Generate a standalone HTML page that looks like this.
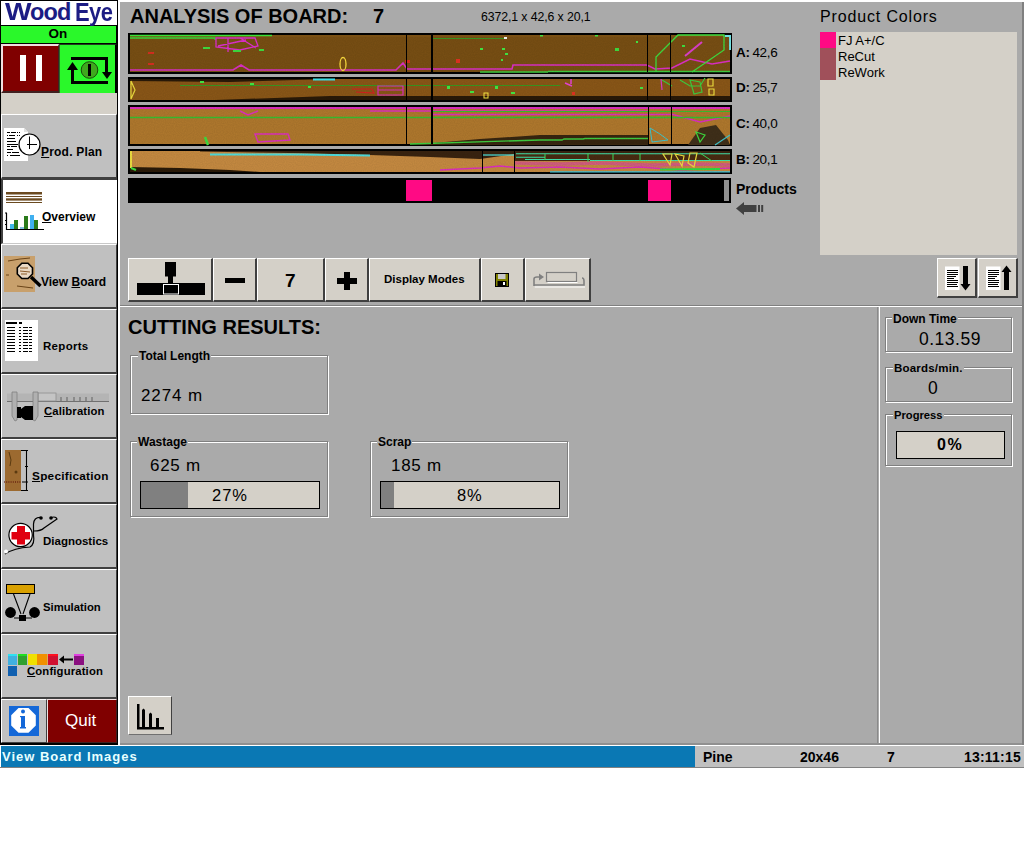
<!DOCTYPE html>
<html><head><meta charset="utf-8">
<style>
*{box-sizing:border-box}
html,body{margin:0;padding:0}
body{width:1024px;height:859px;background:#fff;position:relative;overflow:hidden;font-family:"Liberation Sans",sans-serif;color:#000}
.a{position:absolute}
.sbtn{position:absolute;left:1px;width:116px;height:65px;background:#c0c0c0;border-top:1px solid #fff;border-left:1px solid #fff;border-bottom:2px solid #404040;border-right:1px solid #404040}
.lbl{position:absolute;font-weight:bold;font-size:12px;white-space:nowrap;line-height:1}
.tb{position:absolute;top:258px;height:44px;background:#d4d0c8;border-top:1px solid #fff;border-left:1px solid #fff;border-right:2px solid #404040;border-bottom:2px solid #404040}
.grp{position:absolute;border:1px solid #808080;box-shadow:1px 1px 0 #fff, inset 1px 1px 0 #fff}
.gl{position:absolute;font-weight:bold;font-size:12px;line-height:1;background:#aaa;padding:0 1px;white-space:nowrap}
.txt{position:absolute;white-space:nowrap;line-height:1}
.pb{position:absolute;border:1px solid #000;background:#d4d0c8}
</style></head><body>
<!-- sidebar frame -->
<div class="a" style="left:0;top:0;width:118px;height:745px;background:#000"></div>
<div class="a" style="left:118px;top:0;width:2px;height:745px;background:#fff"></div>
<!-- main gray -->
<div class="a" style="left:120px;top:0;width:904px;height:745px;background:#aaa;border-top:2px solid #fff"></div>
<div class="a" style="left:1022px;top:2px;width:2px;height:743px;background:#808080"></div>

<!-- logo -->
<div class="a" style="left:1px;top:1px;width:116px;height:24px;background:#fff"></div>
<div class="txt" style="left:5px;top:1px;font-size:23.5px;font-weight:bold;color:#1c1c84;transform:scaleX(1.2);transform-origin:0 0">W</div><div class="txt" style="left:30px;top:1px;font-size:23.5px;font-weight:bold;color:#1c1c84;letter-spacing:-0.9px">ood</div><div class="txt" style="left:75px;top:0px;font-size:25.5px;font-weight:bold;color:#1c1c84;letter-spacing:-0.6px;transform:scaleX(0.86);transform-origin:0 0">Eye</div>
<!-- On -->
<div class="a" style="left:1px;top:26px;width:115px;height:17px;background:#2af82a"></div>
<div class="txt" style="left:48.5px;top:27px;font-size:13.5px;font-weight:bold">On</div>
<!-- pause -->
<div class="a" style="left:1px;top:44px;width:58px;height:49px;background:#800000;border-top:2px solid #f0e0e0;border-left:2px solid #f0e0e0;border-right:1px solid #402020;border-bottom:2px solid #402020"></div>
<div class="a" style="left:20px;top:55px;width:6px;height:26px;background:#fff"></div>
<div class="a" style="left:36px;top:55px;width:6px;height:26px;background:#fff"></div>
<!-- refresh -->
<div class="a" style="left:59px;top:44px;width:58px;height:49px;background:#2af82a;border-top:1px solid #204020;border-left:1px solid #2a6a2a;border-right:2px solid #000"></div>
<svg class="a" style="left:59px;top:44px" width="58" height="49" viewBox="0 0 58 49">
 <path d="M13.5 25 V38.5 H49 M12 14.5 H47.5 V28" fill="none" stroke="#000" stroke-width="3"/>
 <path d="M8 26 L13.5 18 L19 26 Z" fill="#000"/>
 <path d="M43 28 L48 35 L53 28 Z" fill="#000"/>
 <circle cx="30.5" cy="26" r="8.3" fill="#3fa81e" stroke="#1a4a0a" stroke-width="1"/>
 <rect x="29" y="20" width="3" height="12" fill="#000"/>
</svg>
<!-- light strip -->
<div class="a" style="left:1px;top:93px;width:116px;height:21px;background:#d4d0c8"></div>

<!-- sidebar buttons -->
<div class="sbtn" style="top:114px"></div>
<div class="a" style="left:1px;top:179px;width:116px;height:65px;background:#fff;border-top:1px solid #404040;border-left:2px solid #404040;border-bottom:1px solid #c8c8c8"></div>
<div class="sbtn" style="top:244px"></div>
<div class="sbtn" style="top:309px"></div>
<div class="sbtn" style="top:374px"></div>
<div class="sbtn" style="top:439px"></div>
<div class="sbtn" style="top:504px"></div>
<div class="sbtn" style="top:569px"></div>
<div class="sbtn" style="top:634px"></div>

<div class="lbl" style="left:41px;top:146px;letter-spacing:0.2px"><u>P</u>rod. Plan</div>
<div class="lbl" style="left:42px;top:211px"><u>O</u>verview</div>
<div class="lbl" style="left:41px;top:276px">View <u>B</u>oard</div>
<div class="lbl" style="left:43px;top:341px;font-size:11.5px;letter-spacing:0.3px">Reports</div>
<div class="lbl" style="left:44px;top:406px;font-size:11.3px;letter-spacing:0.15px"><u>C</u>alibration</div>
<div class="lbl" style="left:32px;top:471px;font-size:11.8px;letter-spacing:0.25px"><u>S</u>pecification</div>
<div class="lbl" style="left:43px;top:536px;font-size:11.5px">Diagnostics</div>
<div class="lbl" style="left:43px;top:601.5px;font-size:11.3px">Simulation</div>
<div class="lbl" style="left:27px;top:666px;font-size:11.3px;letter-spacing:0.15px"><u>C</u>onfiguration</div>

<!-- info / quit -->
<div class="a" style="left:1px;top:699px;width:46px;height:44px;background:#c0c0c0;border-top:1px solid #fff;border-left:1px solid #fff;border-right:1px solid #404040;border-bottom:1px solid #404040"></div>
<div class="a" style="left:47px;top:699px;width:70px;height:44px;background:#800000;border-top:1px solid #f0e0e0;border-left:1px solid #f0e0e0;border-bottom:1px solid #402020;border-right:1px solid #402020"></div>
<div class="txt" style="left:65px;top:712px;font-size:17px;color:#fff">Quit</div>

<!-- sidebar icons -->
<svg class="a" style="left:0;top:0" width="118" height="745" viewBox="0 0 118 745">
<!-- prod plan -->
<path d="M4 128 H24 L28 132 V161 H4 Z" fill="#fff"/>
<path d="M24 128 V132 H28" fill="#e0e0e0"/>
<g fill="#000">
<rect x="7" y="132" width="3" height="1"/><rect x="11" y="132" width="5" height="1"/><rect x="17" y="132" width="1" height="1"/><rect x="19" y="132" width="1" height="1"/>
<rect x="7" y="135" width="1" height="1"/><rect x="9" y="135" width="6" height="1"/><rect x="17" y="135" width="1" height="1"/><rect x="19" y="135" width="1" height="1"/>
<rect x="7" y="138" width="8" height="1"/><rect x="7" y="141" width="9" height="1"/><rect x="7" y="144" width="11" height="1"/>
<rect x="7" y="146" width="3" height="1"/><rect x="11" y="146" width="6" height="1"/>
<rect x="7" y="149" width="6" height="1"/><rect x="7" y="152" width="4" height="1"/><rect x="12" y="152" width="7" height="1"/>
<rect x="7" y="155" width="1" height="1"/><rect x="10" y="155" width="10" height="1"/>
</g>
<circle cx="29.5" cy="144.5" r="10.5" fill="#fff" stroke="#000" stroke-width="1.2"/>
<path d="M27 144.5 H37 M29.5 136.5 V149" stroke="#000" stroke-width="1"/>
<!-- overview -->
<g fill="#6b4a20"><rect x="6" y="192" width="36" height="2.5"/><rect x="6" y="196" width="36" height="1"/><rect x="6" y="198.3" width="36" height="2.3"/><rect x="6" y="202" width="36" height="1"/></g>
<path d="M6.5 213 V229.5 H44 M5 213 H7 M5 220.5 H7 M5 224.5 H7" fill="none" stroke="#000" stroke-width="1.2"/>
<rect x="10" y="224" width="4" height="5" fill="#40b8e8"/><rect x="14" y="220" width="4" height="9" fill="#2a7a1a"/>
<rect x="20" y="227" width="4" height="2" fill="#80c0e0"/><rect x="24" y="216" width="4" height="13" fill="#2a7a1a"/>
<rect x="30" y="215" width="4" height="14" fill="#40b0f0"/><rect x="34" y="220" width="4" height="9" fill="#2a7a1a"/>
<!-- view board -->
<rect x="4" y="256" width="31" height="36" fill="#c8a06c"/>
<path d="M8 261 L20 259 L30 258 M17 286 L25 287 L33 288 M6 275 H9" stroke="#6a4418" stroke-width="1" fill="none"/>
<path d="M21.8 263.3 H28 L32.5 267.8 V274 L28 278.5 H21.8 L17.3 274 V267.8 Z" fill="#e8d8c4" stroke="#000" stroke-width="1.6"/>
<path d="M20 268 H28 M20 271 L30 272 M21 274 H27" stroke="#8a5a28" stroke-width="1"/>
<path d="M31 277 L40.5 286" stroke="#000" stroke-width="3.4"/>
<!-- reports -->
<rect x="5" y="320" width="33" height="41" fill="#fff"/>
<rect x="6" y="322" width="11" height="2" fill="#000"/><rect x="19" y="322" width="3" height="2" fill="#000"/>
<g fill="#000" id="rrow">
<rect x="7" y="327" width="8" height="1"/><rect x="19" y="327" width="2" height="1"/><rect x="23" y="327" width="5" height="1"/><rect x="29" y="327" width="3" height="1"/>
<rect x="7" y="330" width="8" height="1"/><rect x="19" y="330" width="2" height="1"/><rect x="23" y="330" width="5" height="1"/><rect x="29" y="330" width="3" height="1"/>
<rect x="7" y="333" width="8" height="1"/><rect x="19" y="333" width="2" height="1"/><rect x="23" y="333" width="5" height="1"/><rect x="29" y="333" width="3" height="1"/>
<rect x="7" y="336" width="8" height="1"/><rect x="19" y="336" width="2" height="1"/><rect x="23" y="336" width="5" height="1"/><rect x="29" y="336" width="3" height="1"/>
<rect x="7" y="339" width="8" height="1"/><rect x="19" y="339" width="2" height="1"/><rect x="23" y="339" width="5" height="1"/><rect x="29" y="339" width="3" height="1"/>
<rect x="7" y="342" width="8" height="1"/><rect x="19" y="342" width="2" height="1"/><rect x="23" y="342" width="5" height="1"/><rect x="29" y="342" width="3" height="1"/>
<rect x="7" y="345" width="8" height="1"/><rect x="19" y="345" width="2" height="1"/><rect x="23" y="345" width="5" height="1"/><rect x="29" y="345" width="3" height="1"/>
<rect x="7" y="348" width="8" height="1"/><rect x="19" y="348" width="2" height="1"/><rect x="23" y="348" width="5" height="1"/><rect x="29" y="348" width="3" height="1"/>
<rect x="7" y="351" width="8" height="1"/><rect x="19" y="351" width="2" height="1"/><rect x="23" y="351" width="5" height="1"/><rect x="29" y="351" width="3" height="1"/>
</g>
<!-- calibration -->
<rect x="7" y="393.5" width="102" height="8" fill="#b4b4b4"/>
<path d="M7 401.5 H109" stroke="#707070" stroke-width="1"/>
<path d="M61 397 V401 M67 397 V401 M74 397 V401 M80 397 V401 M86 397 V401 M92 397 V401" stroke="#606060" stroke-width="1"/>
<rect x="38" y="393" width="18" height="8" fill="#c4c4c4" stroke="#909090" stroke-width="0.8"/>
<path d="M12 392 H17 V420 L15 421 L12 416 Z" fill="#b0b0b0" stroke="#808080" stroke-width="0.8"/>
<path d="M33 392 H38 V416 L35 421 L33 420 Z" fill="#b0b0b0" stroke="#808080" stroke-width="0.8"/>
<rect x="17" y="407" width="4" height="11" fill="#000"/><path d="M21 409 L25 406 H33 V420 H25 L21 417 Z" fill="#000"/>
<!-- specification -->
<rect x="5" y="450" width="16" height="41" fill="#9c6a30"/>
<path d="M9 452 L11 460 L10 466" stroke="#5a3a10" stroke-width="1" fill="none"/>
<circle cx="16" cy="472" r="1.5" fill="#5a3a10"/>
<path d="M21 450.5 H28 M26.5 450.5 V490.5 M21 490.5 H28 M22 482 H28 M25 466.5 H28" stroke="#000" stroke-width="1.1" fill="none"/>
<path d="M4 482 H21" stroke="#500000" stroke-width="1" stroke-dasharray="1 1.2"/>
<!-- diagnostics -->
<path d="M5 554 Q14 548 30 547 Q35 544 33.5 535 V524 Q34 517 41 517.5 M34 531 Q41 531 44 528 L57 519 Q56 516 51 517.5" fill="none" stroke="#000" stroke-width="1.2"/>
<circle cx="41" cy="518" r="1.8" fill="#000"/><circle cx="51" cy="518" r="1.8" fill="#000"/>
<circle cx="6" cy="551.5" r="2" fill="#fff"/>
<circle cx="20.6" cy="535" r="11.7" fill="#fff" stroke="#000" stroke-width="1.2"/>
<rect x="11.5" y="532" width="18.5" height="7.5" fill="#e00010"/><rect x="17" y="526" width="8" height="18.5" fill="#e00010"/>
<!-- simulation -->
<rect x="6.5" y="584.5" width="28" height="9" fill="#d8a000" stroke="#000" stroke-width="1"/>
<path d="M13.5 594 L21 614 M30 594 L23 614 M14 618 H32" stroke="#000" stroke-width="1.1" fill="none"/>
<circle cx="10.5" cy="612.5" r="5.4" fill="#000"/><circle cx="34.5" cy="612.5" r="5.4" fill="#000"/>
<rect x="19" y="615" width="7" height="6" fill="#000"/>
<!-- configuration -->
<rect x="8" y="654" width="9" height="11" fill="#40b0e0"/><rect x="8" y="654" width="9" height="2" fill="#30e0f0"/>
<rect x="18" y="654" width="9" height="11" fill="#30a030"/><rect x="18" y="654" width="9" height="2" fill="#20e020"/>
<rect x="28" y="654" width="9" height="11" fill="#f0e000"/>
<rect x="37" y="654" width="10.5" height="11" fill="#f09000"/>
<rect x="48" y="654" width="10" height="11" fill="#d01030"/><rect x="48" y="654" width="10" height="2" fill="#ff1020"/>
<path d="M63 659.5 H73" stroke="#000" stroke-width="2"/><path d="M59 659.5 L64 655.5 V663.5 Z" fill="#000"/>
<rect x="74" y="654" width="10" height="11" fill="#8a1080"/><rect x="74" y="654" width="10" height="2" fill="#e040e0"/>
<rect x="8" y="666" width="9" height="10" fill="#1060b0"/>
<!-- info -->
<rect x="9" y="706" width="30" height="30" fill="#1468d8"/>
<path d="M18.5 708 H28.5 L35.8 715.3 V725.5 L28.5 732.8 H18.5 L11.2 725.5 V715.3 Z" fill="#fff"/>
<circle cx="23" cy="711.5" r="2" fill="#1468d8"/>
<rect x="21" y="716" width="4" height="12" fill="#1468d8"/><rect x="20" y="727" width="6" height="1.5" fill="#1468d8"/><rect x="20" y="716" width="2" height="1.2" fill="#1468d8"/>
</svg>
<!-- status bar -->
<div class="a" style="left:0;top:745px;width:1024px;height:23px;background:#c0c0c0;border-top:1px solid #fff;border-bottom:1px solid #808080"></div>
<div class="a" style="left:0;top:746px;width:695px;height:21px;background:#0a78b4;border-left:1px solid #fff"></div>
<div class="txt" style="left:2px;top:750px;font-size:13px;font-weight:bold;color:#e8ffff;letter-spacing:0.98px">View Board Images</div>
<div class="txt" style="left:703px;top:749.5px;font-size:14px;font-weight:bold">Pine</div>
<div class="txt" style="left:800px;top:749.5px;font-size:14px;font-weight:bold">20x46</div>
<div class="txt" style="left:887px;top:749.5px;font-size:14px;font-weight:bold">7</div>
<div class="txt" style="left:964px;top:749.5px;font-size:14px;font-weight:bold;letter-spacing:0.2px">13:11:15</div>

<!-- title -->
<div class="txt" style="left:130px;top:6px;font-size:20px;font-weight:bold">ANALYSIS OF BOARD:</div>
<div class="txt" style="left:373px;top:6px;font-size:20px;font-weight:bold">7</div>
<div class="txt" style="left:481px;top:11px;font-size:12.3px;letter-spacing:-0.1px">6372,1 x 42,6 x 20,1</div>

<!-- boards -->
<svg class="a" style="left:0;top:0" width="740" height="205" viewBox="0 0 740 205">
<defs>
<filter id="nz" x="0" y="0" width="100%" height="100%"><feTurbulence type="fractalNoise" baseFrequency="0.9" numOctaves="1" seed="3"/><feColorMatrix values="0 0 0 0 0  0 0 0 0 0  0 0 0 0 0  0 0 0 0.35 0"/><feComposite in2="SourceGraphic" operator="in"/></filter>
</defs>
<rect x="128" y="33" width="604" height="41" fill="#000"/>
<rect x="128" y="77" width="604" height="25" fill="#000"/>
<rect x="128" y="105" width="604" height="41" fill="#000"/>
<rect x="128" y="149" width="604" height="25" fill="#000"/>
<!-- A -->
<rect x="130" y="35" width="600" height="37" fill="#7a5014"/>
<g fill="none" stroke-width="1.3">
<path d="M130 35.5 H272 M130 38 H215 V40" stroke="#38e038"/>
<path d="M216 38 H255 L258 46 L240 50 L216 47 Z M228 38 V52 M240 38 L256 48 M218 46 L246 40" stroke="#e030d0"/>
<path d="M130 70 H233 L241 65 L249 70 H396 L403 63 L407 69 H512 L513 65 H647 L655 69 L672 68 L690 59 L712 64 L730 61" stroke="#e030c8" stroke-width="1.6"/>
<path d="M480 72 H548 M548 71.5 H730" stroke="#40d040"/>
<path d="M433 38.5 H505" stroke="#3a9a20" stroke-width="1.2"/>
<path d="M656 72 V57 L678 35 H724 V50 L692 72" stroke="#40e040"/>
<path d="M685 56 L702 42" stroke="#e040d0" stroke-width="2"/>
<ellipse cx="343" cy="64" rx="3" ry="6.5" stroke="#ffe040"/>
<path d="M725 36 H730 V50" stroke="#70e0e0" stroke-width="2"/>
</g>
<g fill="#40e040"><rect x="203" y="47" width="7" height="2"/><rect x="233" y="50" width="8" height="2"/><rect x="259" y="49" width="5" height="2"/><rect x="615" y="48" width="4" height="3"/><rect x="682" y="45" width="3" height="2"/></g>
<g fill="#d83020"><rect x="148" y="52" width="6" height="2"/><rect x="148" y="63" width="6" height="2"/><rect x="405" y="60" width="5" height="3"/></g>
<rect x="130" y="37" width="600" height="35" fill="#000" filter="url(#nz)" opacity="0.3"/>
<!-- D -->
<rect x="130" y="79" width="600" height="21" fill="#8c5818"/>
<path d="M130 79 H330 L230 82 L130 81 Z" fill="#2a1a08"/>
<path d="M215 100 L330 96 H730 V100 Z" fill="#2a1a08"/>
<g fill="none" stroke-width="1.2">
<path d="M180 85.5 H560" stroke="#3a9a20"/>
<path d="M131 81 V99 M131 81 L135 90 L131 99" stroke="#f0e040"/>
<path d="M378 86 H403 V95 H378 Z M378 90 H403" stroke="#e030c0"/>
<path d="M352 89 L372 89 L374 93 L356 92" stroke="#d82020"/>
<path d="M690 80 L700 82 L702 92 L694 94 Z M662 80 L672 86 M680 80 L690 86 H700 L705 78" stroke="#40d040"/>
<path d="M708 79 H713 V86 H708 Z M709 89 H714 V95 H709 Z" stroke="#f0e040"/>
<path d="M313 79.5 H335" stroke="#40e8f0" stroke-width="2"/>
<path d="M661 79 L662 90" stroke="#e040d0"/>
</g>
<rect x="130" y="79" width="600" height="21" fill="#000" filter="url(#nz)" opacity="0.3"/>
<!-- C -->
<rect x="130" y="107" width="600" height="37" fill="#b27a2e"/>
<path d="M410 145 L480 139 L540 135 H648 V145 Z" fill="#382610"/>
<path d="M688 145 L700 128 L716 125 L728 140 L730 145 Z" fill="#40301a"/>
<g fill="none">
<path d="M130 108 H730" stroke="#e030c0" stroke-width="2.2"/>
<path d="M370 111 H648" stroke="#e030c0" stroke-width="1.5"/>
<path d="M433 114.5 H671 M671 114 L700 122 L730 116" stroke="#e030c0" stroke-width="1.5"/>
<path d="M130 117.5 H730" stroke="#3ac030" stroke-width="1.5"/>
<path d="M433 111.5 H730" stroke="#3ac030" stroke-width="1.2"/>
<path d="M540 140 H562 L564 139 H583 L585 138.5 H648 M410 144 L540 140" stroke="#40d040" stroke-width="1.3"/>
<path d="M240 111 L248 115 L258 111" stroke="#e030c0" stroke-width="1.5"/>
<path d="M255 134 H288 L290 140 L258 142 Z" stroke="#e030c0" stroke-width="1.4"/>
<path d="M205 137 L208 145" stroke="#40e040" stroke-width="2.5"/>
<path d="M650 128 L660 134 L668 140 L652 142 Z" stroke="#40c8d0" stroke-width="1"/>
<path d="M696 132 L705 135 L700 142 Z" stroke="#40e040" stroke-width="1.2"/>
<path d="M715 145 L730 135" stroke="#40c8d0" stroke-width="1.2"/>
</g>
<rect x="130" y="107" width="600" height="37" fill="#000" filter="url(#nz)" opacity="0.3"/>
<!-- B -->
<rect x="130" y="151" width="600" height="21" fill="#c88c42"/>
<path d="M200 151 H730 V153 L600 153 L515 154 L480 159 L430 157 L370 155 L290 153 L200 151.5 Z" fill="#3a2410"/>
<path d="M515 153 H730 V161 H515 Z" fill="#4a2c12"/>
<path d="M130 172 V167 L180 168 L230 170 L260 172 Z" fill="#2a1a08"/>
<g fill="none">
<path d="M515 163 L560 164 L600 163 L650 165 L700 164 L730 165" stroke="#e03ab0" stroke-width="3.5" opacity="0.55"/>
<path d="M440 170 L480 168 L500 166 L520 168 L560 167 L600 169 L640 167 L680 170 L730 168" stroke="#e030c0" stroke-width="1.6"/>
<path d="M210 154.5 H300 L370 155.5" stroke="#50e0e0" stroke-width="1.8"/>
<path d="M483 155 H515" stroke="#50e0d8" stroke-width="1.3"/>
<path d="M516 153.8 H730 M516 157.2 H545 M525 159.5 H590 M590 160.5 H730" stroke="#40e8b0" stroke-width="1.1"/>
<path d="M588 153 V162 M613 153 V161 M545 154 V160 M640 153 V161 M700 153 L712 161" stroke="#40e060" stroke-width="1"/>
<path d="M550 171.8 H730" stroke="#40c8e0" stroke-width="1.2"/>
<path d="M660 169.5 L720 169" stroke="#30e040" stroke-width="2"/>
<path d="M131 151 V168" stroke="#f0e040" stroke-width="2"/>
<path d="M131 168 L136 170" stroke="#40e040" stroke-width="2"/>
<path d="M663 154 H672 L670 165 Z M675 154 L684 156 L682 166 Z M690 153 L697 153 L694 167 L688 163 Z" stroke="#f0e040" stroke-width="1.2"/>
</g>
<rect x="130" y="151" width="600" height="21" fill="#000" filter="url(#nz)" opacity="0.3"/>
<g fill="#40e040">
<rect x="480" y="48" width="3" height="2"/><rect x="502" y="48" width="3" height="2"/><rect x="505" y="53" width="3" height="2"/><rect x="501" y="59" width="2" height="2"/>
<rect x="540" y="35" width="3" height="1.5"/><rect x="595" y="35" width="3" height="1.5"/><rect x="636" y="41" width="2" height="2"/>
<rect x="447" y="86" width="3" height="3"/><rect x="495" y="86" width="3" height="3"/><rect x="470" y="91" width="4" height="2"/><rect x="511" y="92" width="4" height="2"/><rect x="640" y="87" width="3" height="2"/>
<rect x="200" y="81" width="4" height="2"/><rect x="250" y="83" width="4" height="2"/><rect x="308" y="86" width="3" height="2"/>
</g>
<g fill="#d83020"><rect x="456" y="59" width="4" height="4"/><rect x="572" y="92" width="3" height="3"/></g>
<rect x="504" y="37" width="3" height="2" fill="#f0f0f0"/>
<rect x="484" y="93" width="4" height="5" fill="none" stroke="#f0e040" stroke-width="1"/>
<path d="M565 83 L572 86 M571 79 V84" stroke="#e040d0" stroke-width="1.5"/>
<g fill="#000">
<rect x="406" y="35" width="1" height="37"/><rect x="431" y="35" width="2" height="37"/><rect x="647" y="35" width="1" height="37"/><rect x="670" y="35" width="1" height="37"/>
<rect x="406" y="79" width="1" height="21"/><rect x="431" y="79" width="2" height="21"/><rect x="647" y="79" width="1" height="21"/><rect x="670" y="79" width="1" height="21"/>
<rect x="406" y="107" width="1" height="37"/><rect x="431" y="107" width="2" height="37"/><rect x="648" y="107" width="1" height="37"/><rect x="671" y="107" width="1" height="37"/>
<rect x="482" y="151" width="1" height="21"/><rect x="514" y="151" width="1" height="21"/>
</g>
</svg>
<!-- products bar -->
<div class="a" style="left:128px;top:178px;width:603px;height:25px;background:#000"></div>
<div class="a" style="left:406px;top:180px;width:26px;height:21px;background:#ff0a84"></div>
<div class="a" style="left:648px;top:180px;width:23px;height:21px;background:#ff0a84"></div>
<div class="a" style="left:724px;top:180px;width:5px;height:21px;background:#909090"></div>

<div class="txt" style="left:736px;top:46px;font-size:13.5px;word-spacing:-0.5px;letter-spacing:-0.35px"><b>A:</b> 42,6</div>
<div class="txt" style="left:736px;top:81px;font-size:13.5px;word-spacing:-0.5px;letter-spacing:-0.35px"><b>D:</b> 25,7</div>
<div class="txt" style="left:736px;top:117px;font-size:13.5px;word-spacing:-0.5px;letter-spacing:-0.35px"><b>C:</b> 40,0</div>
<div class="txt" style="left:736px;top:153px;font-size:13.5px;word-spacing:-0.5px;letter-spacing:-0.35px"><b>B:</b> 20,1</div>
<div class="txt" style="left:736px;top:181.5px;font-size:14px;font-weight:bold">Products</div>

<!-- product colors -->
<div class="txt" style="left:820px;top:9px;font-size:16px;letter-spacing:0.85px">Product Colors</div>
<div class="a" style="left:820px;top:32px;width:197px;height:223px;background:#d4d0c8"></div>
<div class="a" style="left:820px;top:32px;width:16px;height:16px;background:#ff0a84"></div>
<div class="a" style="left:820px;top:48px;width:16px;height:32px;background:#a0505a"></div>
<div class="txt" style="left:838px;top:34px;font-size:13px">FJ A+/C</div>
<div class="txt" style="left:838px;top:50px;font-size:13px">ReCut</div>
<div class="txt" style="left:838px;top:66px;font-size:13px">ReWork</div>

<!-- toolbar -->
<div class="tb" style="left:128px;width:85px"></div>
<div class="tb" style="left:213px;width:44px"></div>
<div class="tb" style="left:257px;width:68px"></div>
<div class="tb" style="left:325px;width:44px"></div>
<div class="tb" style="left:369px;width:112px"></div>
<div class="tb" style="left:481px;width:44px"></div>
<div class="tb" style="left:525px;width:66px"></div>
<div class="tb" style="left:937px;width:40px;height:40px"></div>
<div class="tb" style="left:978px;width:40px;height:40px"></div>
<div class="a" style="left:225px;top:277.5px;width:20px;height:5px;background:#000"></div>
<div class="txt" style="left:285px;top:271px;font-size:19px;font-weight:bold">7</div>
<div class="a" style="left:337px;top:278px;width:20px;height:6px;background:#000"></div>
<div class="a" style="left:344px;top:272px;width:6px;height:18px;background:#000"></div>
<div class="txt" style="left:384px;top:274px;font-size:11.5px;font-weight:bold">Display Modes</div>

<!-- histogram button -->
<div class="tb" style="left:128px;top:696px;width:44px;height:39px;border-bottom:1px solid #707070;border-right:1px solid #404040"></div>
<!-- toolbar icons -->
<svg class="a" style="left:120px;top:250px" width="904" height="60" viewBox="120 250 904 60">
<rect x="165" y="262" width="11" height="14.5" fill="#000"/>
<rect x="168" y="276" width="5" height="7" fill="#000"/>
<rect x="137" y="283" width="68" height="12" fill="#000"/>
<rect x="163.5" y="284.5" width="15" height="9.5" fill="#000" stroke="#fff" stroke-width="1"/>
<!-- save -->
<rect x="495" y="273" width="14" height="14" fill="#000"/>
<rect x="496" y="274" width="12" height="12" fill="#808000"/>
<rect x="498" y="274" width="7.5" height="5" fill="#c8c8c8"/>
<rect x="497.5" y="281" width="9" height="5" fill="#000"/><rect x="503" y="282" width="2" height="3" fill="#fff"/>
<!-- repeat disabled -->
<rect x="546.5" y="272.5" width="30" height="9" fill="none" stroke="#808080" stroke-width="1.2"/>
<path d="M547.5 282.5 H577.5" stroke="#fff" stroke-width="1"/>
<path d="M534 286 V279 Q534 277 537 277 H540 M582 278 Q584 278 584 281 V285 H534" fill="none" stroke="#808080" stroke-width="1.6"/>
<path d="M534.8 287 H585" stroke="#fff" stroke-width="1"/>
<path d="M539 273.5 L544 277 L539 280.5 Z" fill="#808080"/>
<!-- list down/up -->
<rect x="945" y="266.5" width="14.5" height="23.5" fill="#fff"/>
<g fill="#000">
<rect x="947" y="270" width="11" height="1"/><rect x="947" y="272" width="11" height="1"/><rect x="947" y="274" width="11" height="1"/><rect x="947" y="276" width="9" height="1"/><rect x="947" y="278" width="7" height="1"/><rect x="947" y="280" width="11" height="1"/><rect x="947" y="282" width="11" height="1"/><rect x="947" y="284" width="10" height="1"/><rect x="947" y="286" width="11" height="1"/>
</g>
<rect x="963" y="266" width="5" height="18.5" fill="#000"/><path d="M960.5 284 H970.5 L965.5 290.5 Z" fill="#000"/>
<rect x="986" y="266.5" width="14.5" height="23.5" fill="#fff"/>
<g fill="#000">
<rect x="988" y="270" width="11" height="1"/><rect x="988" y="272" width="11" height="1"/><rect x="988" y="274" width="11" height="1"/><rect x="988" y="276" width="9" height="1"/><rect x="988" y="278" width="7" height="1"/><rect x="988" y="280" width="11" height="1"/><rect x="988" y="282" width="11" height="1"/><rect x="988" y="284" width="10" height="1"/><rect x="988" y="286" width="11" height="1"/>
</g>
<rect x="1004" y="271.5" width="5" height="18.5" fill="#000"/><path d="M1001.5 272 H1011.5 L1006.5 265.5 Z" fill="#000"/>
</svg>
<!-- products arrow -->
<svg class="a" style="left:735px;top:200px" width="30" height="17" viewBox="735 200 30 17">
<path d="M736 208.5 L744 202 V215 Z" fill="#404040"/>
<rect x="743" y="205" width="13.5" height="7" fill="#404040"/>
<rect x="758" y="205" width="2" height="7" fill="#404040"/><rect x="761.2" y="205" width="2" height="7" fill="#404040"/>
</svg>
<!-- histogram icon -->
<svg class="a" style="left:128px;top:696px" width="44" height="40" viewBox="128 696 44 40">
<rect x="137" y="704" width="2.5" height="25" fill="#000"/>
<rect x="137" y="727" width="27" height="2.5" fill="#000"/>
<path d="M142 729 V710 L143.5 708.5 L145 710 V729 Z" fill="#000"/>
<path d="M149 729 V714 L150.5 712.5 L152 714 V729 Z" fill="#000"/>
<rect x="156" y="718" width="3" height="11" fill="#000"/>
</svg>
<!-- separator -->
<div class="a" style="left:120px;top:305px;width:902px;height:1px;background:#808080"></div>
<div class="a" style="left:120px;top:306px;width:902px;height:1px;background:#fff"></div>
<div class="a" style="left:877px;top:307px;width:1px;height:437px;background:#8a8a8a"></div>
<div class="a" style="left:879px;top:307px;width:1px;height:437px;background:#fff"></div>
<div class="a" style="left:120px;top:743px;width:902px;height:2px;background:#909090"></div>

<!-- cutting results -->
<div class="txt" style="left:128px;top:317px;font-size:20px;font-weight:bold">CUTTING RESULTS:</div>
<div class="grp" style="left:130px;top:355px;width:198px;height:59px"></div>
<div class="gl" style="left:138px;top:350px">Total Length</div>
<div class="txt" style="left:141px;top:387px;font-size:17px;letter-spacing:0.9px">2274 m</div>

<div class="grp" style="left:130px;top:441px;width:198px;height:76px"></div>
<div class="gl" style="left:137px;top:436px">Wastage</div>
<div class="txt" style="left:150px;top:457px;font-size:17px;letter-spacing:0.7px">625 m</div>
<div class="pb" style="left:140px;top:481px;width:180px;height:28px"></div>
<div class="a" style="left:141px;top:482px;width:47px;height:26px;background:#808080"></div>
<div class="txt" style="left:212px;top:487px;font-size:16.5px;letter-spacing:1px">27%</div>

<div class="grp" style="left:370px;top:441px;width:198px;height:76px"></div>
<div class="gl" style="left:377px;top:436px">Scrap</div>
<div class="txt" style="left:391px;top:457px;font-size:17px;letter-spacing:0.7px">185 m</div>
<div class="pb" style="left:380px;top:481px;width:180px;height:28px"></div>
<div class="a" style="left:381px;top:482px;width:13px;height:26px;background:#808080"></div>
<div class="txt" style="left:457px;top:487px;font-size:16.5px;letter-spacing:0.8px">8%</div>

<!-- right panel -->
<div class="grp" style="left:885px;top:317px;width:127px;height:35px"></div>
<div class="gl" style="left:892px;top:313px">Down Time</div>
<div class="txt" style="left:919px;top:331px;font-size:17.5px;letter-spacing:0.5px">0.13.59</div>
<div class="grp" style="left:885px;top:367px;width:127px;height:35px"></div>
<div class="gl" style="left:893px;top:363px;font-size:11.5px;letter-spacing:0.2px">Boards/min.</div>
<div class="txt" style="left:928px;top:380px;font-size:17.5px">0</div>
<div class="grp" style="left:885px;top:414px;width:127px;height:52px"></div>
<div class="gl" style="left:893px;top:410px;font-size:11.2px">Progress</div>
<div class="pb" style="left:896px;top:431px;width:109px;height:28px"></div>
<div class="txt" style="left:937px;top:437px;font-size:16px;font-weight:bold;letter-spacing:1.5px">0%</div>

</body></html>
